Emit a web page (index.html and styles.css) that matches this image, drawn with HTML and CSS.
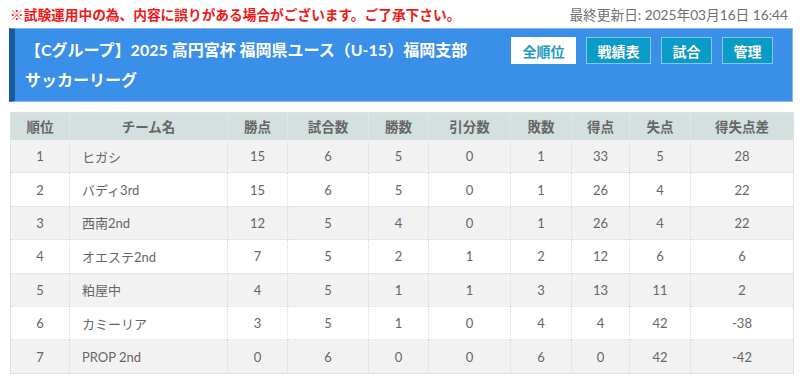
FILE: index.html
```html
<!DOCTYPE html>
<html lang="ja">
<head>
<meta charset="utf-8">
<link rel="stylesheet" href="styles.css">
</head>
<body>
<div class="topbar">
  <div class="notice">※試験運用中の為、内容に誤りがある場合がございます。ご了承下さい。</div>
  <div class="updated">最終更新日: 2025年03月16日 16:44</div>
</div>
<div class="head">
  <h1 class="title">【Cグループ】2025 高円宮杯 福岡県ユース（U-15）福岡支部<br>サッカーリーグ</h1>
  <div class="btns">
    <span class="btn active">全順位</span>
    <span class="btn">戦績表</span>
    <span class="btn">試合</span>
    <span class="btn">管理</span>
  </div>
</div>
<table class="standings">
  <colgroup>
    <col class="c-rank"><col class="c-team"><col class="c-60"><col class="c-81"><col class="c-60"><col class="c-82"><col class="c-61"><col class="c-58"><col class="c-61"><col class="c-diff">
  </colgroup>
  <thead>
    <tr><th>順位</th><th>チーム名</th><th>勝点</th><th>試合数</th><th>勝数</th><th>引分数</th><th>敗数</th><th>得点</th><th>失点</th><th>得失点差</th></tr>
  </thead>
  <tbody>
    <tr><td>1</td><td class="team">ヒガシ</td><td>15</td><td>6</td><td>5</td><td>0</td><td>1</td><td>33</td><td>5</td><td>28</td></tr>
    <tr><td>2</td><td class="team">バディ3rd</td><td>15</td><td>6</td><td>5</td><td>0</td><td>1</td><td>26</td><td>4</td><td>22</td></tr>
    <tr><td>3</td><td class="team">西南2nd</td><td>12</td><td>5</td><td>4</td><td>0</td><td>1</td><td>26</td><td>4</td><td>22</td></tr>
    <tr><td>4</td><td class="team">オエステ2nd</td><td>7</td><td>5</td><td>2</td><td>1</td><td>2</td><td>12</td><td>6</td><td>6</td></tr>
    <tr><td>5</td><td class="team">粕屋中</td><td>4</td><td>5</td><td>1</td><td>1</td><td>3</td><td>13</td><td>11</td><td>2</td></tr>
    <tr><td>6</td><td class="team">カミーリア</td><td>3</td><td>5</td><td>1</td><td>0</td><td>4</td><td>4</td><td>42</td><td>-38</td></tr>
    <tr><td>7</td><td class="team">PROP 2nd</td><td>0</td><td>6</td><td>0</td><td>0</td><td>6</td><td>0</td><td>42</td><td>-42</td></tr>
  </tbody>
</table>
</body>
</html>
```
FILE: styles.css
```css
* { box-sizing: border-box; }
body {
  margin: 0;
  background: #fff;
  font-family: "Lato", "Noto Sans CJK JP", sans-serif;
  color: #666;
}
.topbar {
  display: flex;
  justify-content: space-between;
  align-items: center;
  height: 27px;
  padding: 0 12px 0 10px;
  font-size: 13.7px;
}
.notice {
  color: #f01818;
  font-weight: bold;
}
.updated {
  color: #707070;
}
.head {
  display: flex;
  justify-content: space-between;
  align-items: flex-start;
  margin: 1px 7px 0 9px;
  height: 74px;
  background: #3a8fe9;
  border: 1px solid #84b9ef;
  border-left: 6px solid #1c5a9e;
  padding: 0 19px 0 10px;
}
.title {
  margin: 0;
  padding-top: 6px;
  font-size: 16px;
  line-height: 30px;
  font-weight: bold;
  color: #fff;
}
.btns {
  display: flex;
  gap: 10px;
  margin-top: 8px;
}
.btn {
  display: flex;
  align-items: center;
  justify-content: center;
  height: 27px;
  padding: 0 10.5px;
  font-size: 14px;
  font-weight: bold;
  color: #fff;
  background: #0a9cc9;
  border: 1px solid #86c6ea;
  text-shadow: 0 0 1px rgba(0,0,0,0.25);
}
.btn.active {
  background: #fff;
  color: #2399c2;
  border-color: #fff;
  text-shadow: none;
}
.c-rank { width: 59px; }
.c-team { width: 158px; }
.c-60 { width: 60px; }
.c-81 { width: 81px; }
.c-82 { width: 82px; }
.c-61 { width: 61px; }
.c-58 { width: 58px; }
.c-diff { width: 103px; }
.standings {
  margin: 10px 0 0 10px;
  width: 783px;
  border-collapse: collapse;
  table-layout: fixed;
  font-size: 13px;
  border: 1px solid #e0e0e0;
}
.standings th {
  height: 27px;
  background: #d4e0e0;
  color: #666;
  font-weight: bold;
  font-size: 13.5px;
  text-align: center;
  border-right: 1px dotted #e6eeee;
  padding: 0;
}
.standings td {
  height: 33.4px;
  text-align: center;
  padding: 0;
  border-right: 1px dotted #dcdcdc;
  border-top: 1px dotted #dcdcdc;
  color: #666;
}
.standings td.team {
  text-align: left;
  padding-left: 12px;
}
.standings tbody tr:nth-child(odd) {
  background: #f2f2f2;
}
.standings tbody tr:nth-child(even) {
  background: #fff;
}
```
